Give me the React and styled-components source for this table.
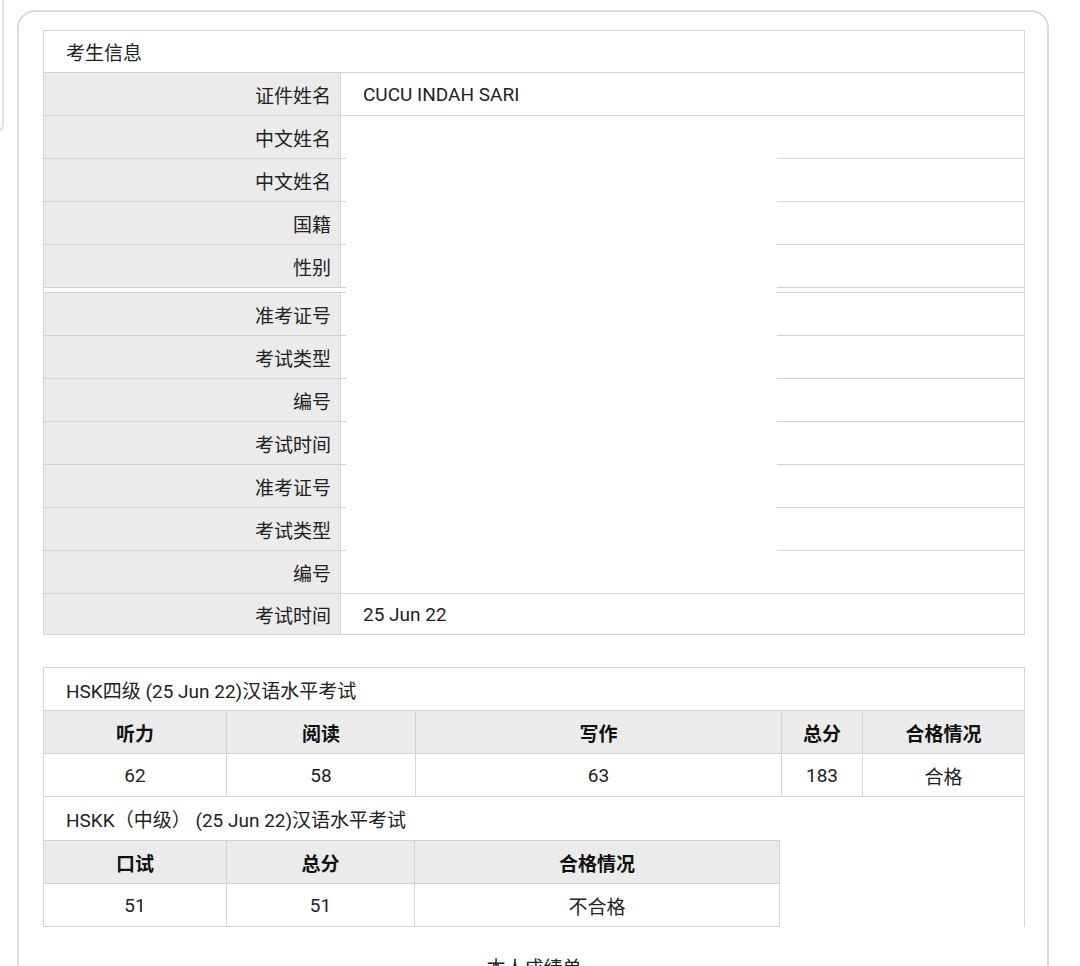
import React from "react";
import styled, { createGlobalStyle } from "styled-components";

const GlobalStyle = createGlobalStyle`
  body {
    margin: 0;
    background: #fff;
    font-family: Roboto, "Noto Sans CJK SC", sans-serif;
    color: #222;
  }
`;

const line = "#d3d3d3";

const Page = styled.div`
  position: relative;
  height: 966px;
  overflow: hidden;
`;

const BackSheet = styled.div`
  position: absolute;
  left: -20px;
  top: -30px;
  width: 20px;
  height: 160px;
  border: 2px solid #e4e4e4;
  border-radius: 0 0 10px 0;
`;

const Card = styled.div`
  margin: 10px 0 0 17px;
  width: 1032px;
  min-height: 1020px;
  box-sizing: border-box;
  border: 2px solid #dadada;
  border-radius: 18px;
  padding: 18px 22px 40px 24px;
`;

const InfoTable = styled.div`
  position: relative;
  border: 1px solid ${line};
`;

const Caption = styled.div`
  height: ${(p) => p.$h || "43px"};
  box-sizing: border-box;
  display: flex;
  align-items: center;
  padding-left: 22px;
  font-size: 19px;
  border-bottom: ${(p) => (p.$open ? "none" : `1px solid ${line}`)};
`;

const InfoRow = styled.div`
  display: grid;
  grid-template-columns: 297px 1fr;
  height: 43px;
  box-sizing: border-box;
  border-bottom: 1px solid ${line};
  &:nth-last-child(2) {
    height: 40px;
    border-bottom: none;
  }
`;

const Label = styled.div`
  background: #ebebeb;
  border-right: 1px solid ${line};
  display: flex;
  align-items: center;
  justify-content: flex-end;
  padding-right: 9px;
  font-size: 19px;
`;

const Value = styled.div`
  display: flex;
  align-items: center;
  padding-left: 22px;
  font-size: 19px;
`;

const Spacer = styled.div`
  height: 5px;
  box-sizing: border-box;
  border-bottom: 1px solid ${line};
`;

const Redaction = styled.div`
  position: absolute;
  left: 302px;
  top: 85px;
  width: 431px;
  height: 476px;
  background: #fff;
`;

const ScoreBox = styled.div`
  margin-top: 32px;
  border: 1px solid ${line};
  border-bottom: none;
`;

const Grid = styled.div`
  display: grid;
  grid-template-columns: ${(p) => p.$cols};
  width: ${(p) => p.$width || "auto"};
  box-sizing: border-box;
  border-right: ${(p) => (p.$boxed ? `1px solid ${line}` : "none")};
  border-top: ${(p) => (p.$boxed ? `1px solid ${line}` : "none")};
`;

const Cell = styled.div`
  height: 43px;
  box-sizing: border-box;
  display: flex;
  align-items: center;
  justify-content: center;
  font-size: 19px;
  border-bottom: 1px solid ${line};
  border-right: 1px solid ${line};
  background: ${(p) => (p.$head ? "#ebebeb" : "#fff")};
  font-weight: ${(p) => (p.$head ? 700 : 400)};
  color: ${(p) => (p.$head ? "#111" : "#222")};
  &:nth-child(${(p) => p.$n}n) {
    border-right: none;
  }
`;

const Footer = styled.div`
  margin-top: 29px;
  text-align: center;
  font-size: 19px;
  line-height: 26px;
`;

const labels = [
  "证件姓名",
  "中文姓名",
  "中文姓名",
  "国籍",
  "性别",
  null,
  "准考证号",
  "考试类型",
  "编号",
  "考试时间",
  "准考证号",
  "考试类型",
  "编号",
  "考试时间",
];

const values = { 0: "CUCU INDAH SARI", 13: "25 Jun 22" };

const hskHead = ["听力", "阅读", "写作", "总分", "合格情况"];
const hskData = ["62", "58", "63", "183", "合格"];
const hskkHead = ["口试", "总分", "合格情况"];
const hskkData = ["51", "51", "不合格"];

export default function App() {
  return (
    <Page>
      <GlobalStyle />
      <BackSheet />
      <Card>
        <InfoTable>
          <Caption $h="42px">考生信息</Caption>
          {labels.map((label, i) =>
            label === null ? (
              <Spacer key={i} />
            ) : (
              <InfoRow key={i}>
                <Label>{label}</Label>
                <Value>{values[i] || ""}</Value>
              </InfoRow>
            )
          )}
          <Redaction />
        </InfoTable>

        <ScoreBox>
          <Caption>HSK四级 (25 Jun 22)汉语水平考试</Caption>
          <Grid $cols="183px 189px 366px 81px 1fr">
            {hskHead.map((t, i) => (
              <Cell key={"h" + i} $head $n={5}>
                {t}
              </Cell>
            ))}
            {hskData.map((t, i) => (
              <Cell key={"d" + i} $n={5}>
                {t}
              </Cell>
            ))}
          </Grid>
          <Caption $open>HSKK（中级） (25 Jun 22)汉语水平考试</Caption>
          <Grid $cols="183px 188px 1fr" $width="736px" $boxed>
            {hskkHead.map((t, i) => (
              <Cell key={"h" + i} $head $n={3}>
                {t}
              </Cell>
            ))}
            {hskkData.map((t, i) => (
              <Cell key={"d" + i} $n={3}>
                {t}
              </Cell>
            ))}
          </Grid>
        </ScoreBox>
        <Footer>本人成绩单</Footer>
      </Card>
    </Page>
  );
}
